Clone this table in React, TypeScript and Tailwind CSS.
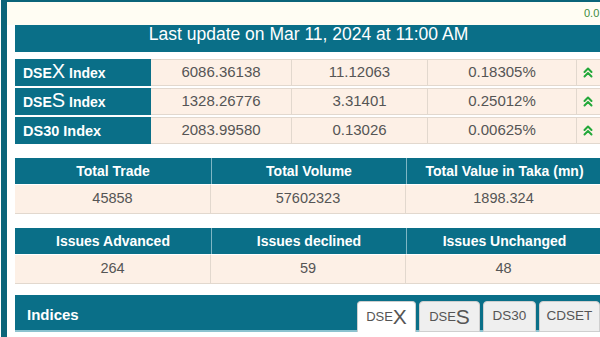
import React from 'react';

const teal = 'bg-[#0a6f88]';

const indexRows = [
  { pre: 'DSE', big: 'X', values: ['6086.36138', '11.12063', '0.18305%'] },
  { pre: 'DSE', big: 'S', values: ['1328.26776', '3.31401', '0.25012%'] },
  { pre: 'DS30', big: '', values: ['2083.99580', '0.13026', '0.00625%'] },
];

const statTables = [
  [
    ['Total Trade', '45858'],
    ['Total Volume', '57602323'],
    ['Total Value in Taka (mn)', '1898.324'],
  ],
  [
    ['Issues Advanced', '264'],
    ['Issues declined', '59'],
    ['Issues Unchanged', '48'],
  ],
];

const UpArrows = () => (
  <svg width="10" height="11" viewBox="0 0 10 11" fill="none" stroke="#23a83a" strokeWidth="2" strokeLinecap="round" strokeLinejoin="round">
    <polyline points="1.5,5 5,1.5 8.5,5" />
    <polyline points="1.5,9.5 5,6 8.5,9.5" />
  </svg>
);

const StatTable: React.FC<{ cols: string[][] }> = ({ cols }) => (
  <div className="grid grid-cols-[196px_195px_196px]">
    {cols.map(([title]) => (
      <div key={title} className={`${teal} h-[26px] flex items-center justify-center text-white font-bold text-[14px] border-l border-[#7fb6c4] first:border-l-0`}>
        {title}
      </div>
    ))}
    {cols.map(([title, value]) => (
      <div key={title + 'v'} className="h-[30px] flex items-center justify-center bg-[#fdf0e6] border border-[#e2d8ce] border-t-white border-l-0 first:border-l text-[14.5px] text-[#555]">
        {value}
      </div>
    ))}
  </div>
);

const App = () => {
  return (
    <div className="w-[600px] h-[337px] overflow-hidden bg-white" style={{ fontFamily: '"Liberation Sans", Arial, sans-serif' }}>
      <div className="ml-[1px] w-[640px] h-full border-l-[6px] border-t-2 border-[#0b6479] pl-[8px]">
        {/* top strip */}
        <div className="-ml-[8px] w-[640px] h-[23px] bg-[#fffdf3] pl-[577px] pt-[5px] text-[11px] leading-[12px] text-[#3d8b3d]">
          0.0
        </div>

        <div className="w-[587px]">
          <div className={`${teal} h-[27px] text-center text-white text-[17.5px] leading-[18px]`}>
            Last update on Mar 11, 2024 at 11:00 AM
          </div>

          {/* index rows */}
          <div className="mt-[7px] flex flex-col gap-[2px]">
            {indexRows.map((row) => (
              <div key={row.pre + row.big} className="h-[27px] grid grid-cols-[136px_141px_136px_149px_25px]">
                <div className={`${teal} flex items-end pl-[8px] pb-[3px] text-white`}>
                  {row.big ? (
                    <span className="font-bold text-[14px] leading-[20px]">
                      {row.pre}
                      <span className="font-normal text-[20px]">{row.big}</span> Index
                    </span>
                  ) : (
                    <span className="font-bold text-[14.5px] leading-[18px] pb-[1px]">{row.pre} Index</span>
                  )}
                </div>
                {row.values.map((v, i) => (
                  <div key={i} className="bg-[#fdf0e6] border border-[#e2d8ce] border-l-0 flex items-center justify-center text-[15px] text-[#555]">
                    {v}
                  </div>
                ))}
                <div className="bg-[#fdf0e6] border border-[#e2d8ce] border-l-0 flex items-center pl-[6px]">
                  <UpArrows />
                </div>
              </div>
            ))}
          </div>

          <div className="mt-[14px]">
            <StatTable cols={statTables[0]} />
          </div>
          <div className="mt-[14px]">
            <StatTable cols={statTables[1]} />
          </div>

          {/* indices bar */}
          <div className={`${teal} mt-[11px] h-[37px] border-b-2 border-[#8cc2cf] flex items-end`}>
            <div className="self-stretch flex items-center pl-[12px] pt-[6px] text-white font-bold text-[15px]">Indices</div>
            <div className="ml-auto flex items-end gap-[3px] pr-[2px] -mb-[2px] text-[#555]">
              <div className="w-[59px] h-[31px] bg-white border border-[#cfcfcf] border-b-0 rounded-t-[4px] flex items-center justify-center">
                <span className="text-[13px]">DSE</span>
                <span className="text-[21px] leading-[22px]">X</span>
              </div>
              <div className="w-[61px] h-[31px] bg-[#efefef] border border-[#cfcfcf] rounded-t-[4px] flex items-center justify-center">
                <span className="text-[13px]">DSE</span>
                <span className="text-[21px] leading-[22px]">S</span>
              </div>
              <div className="w-[53px] h-[31px] bg-[#efefef] border border-[#cfcfcf] rounded-t-[4px] flex items-center justify-center text-[13.5px]">
                DS30
              </div>
              <div className="w-[61px] h-[31px] bg-[#efefef] border border-[#cfcfcf] rounded-t-[4px] flex items-center justify-center text-[13.5px]">
                CDSET
              </div>
            </div>
          </div>
        </div>
      </div>
    </div>
  );
};

export default App;
